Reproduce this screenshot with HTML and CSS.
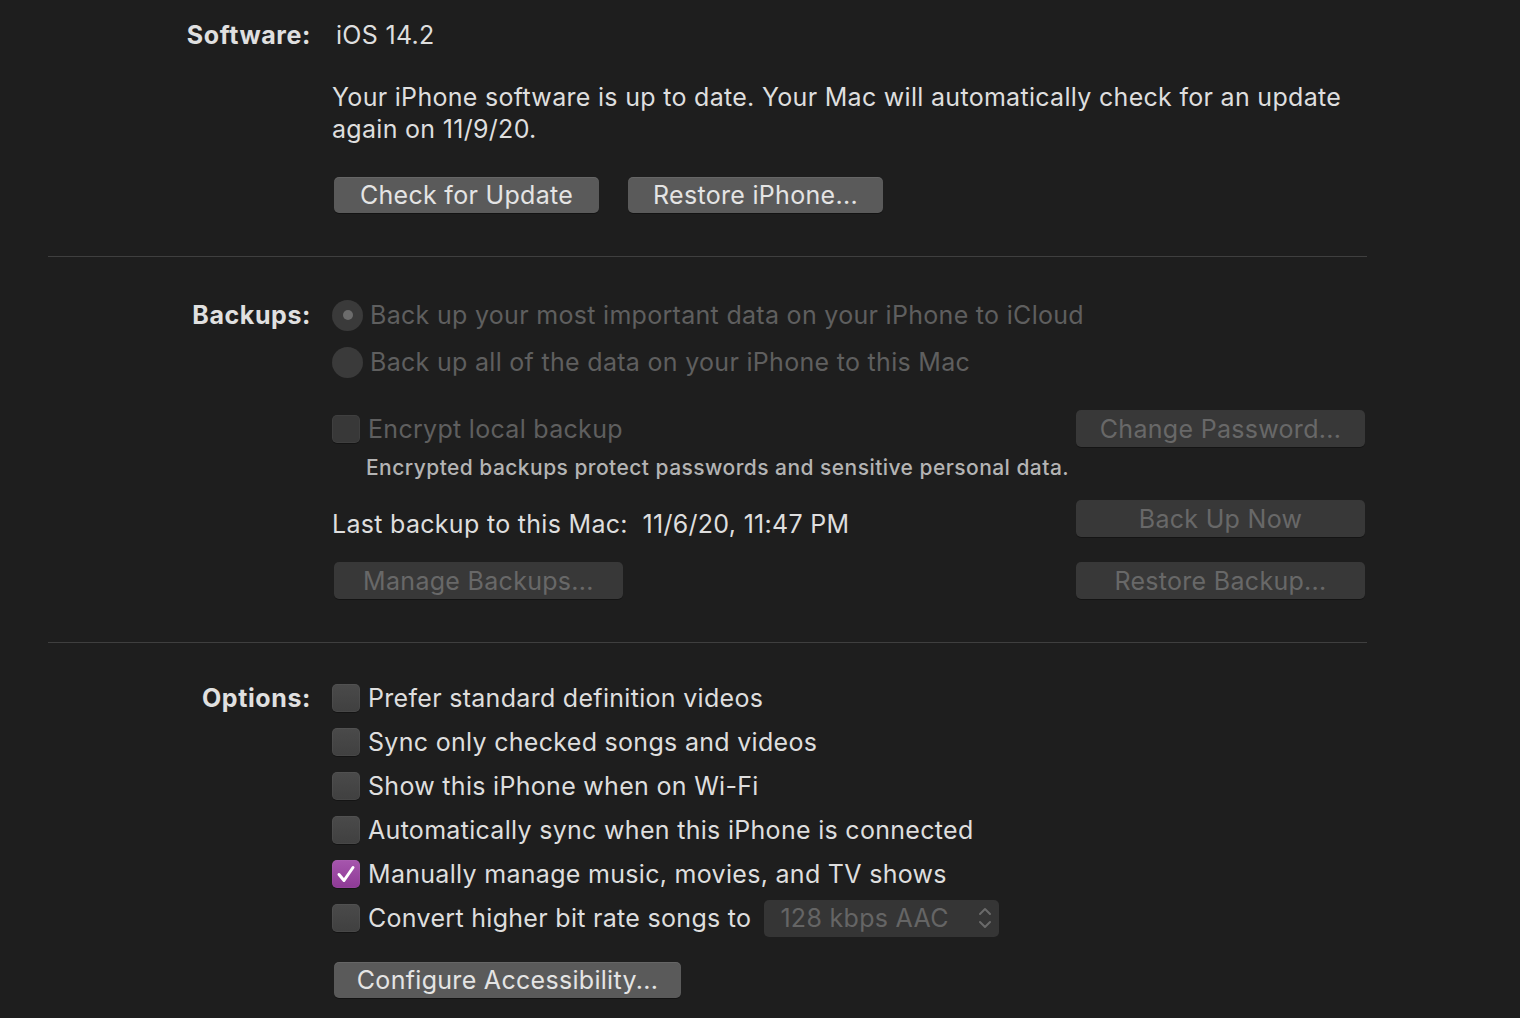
FILE: index.html
```html
<!DOCTYPE html>
<html>
<head>
<meta charset="utf-8">
<link rel="stylesheet" href="styles.css">
</head>
<body>
<div class="page">
  <section class="sec sec-software">
    <div class="label">Software:</div>
    <div class="content">
      <div class="line version">iOS 14.2</div>
      <p class="para">Your iPhone software is up to date. Your Mac will automatically check for an update again on 11/9/20.</p>
      <div class="btnrow">
        <button class="btn btn-check">Check for Update</button>
        <button class="btn btn-restore">Restore iPhone...</button>
      </div>
    </div>
  </section>
  <div class="sep"></div>
  <section class="sec sec-backups">
    <div class="label">Backups:</div>
    <div class="content">
      <div class="radio-row r1"><span class="radio on"></span><span class="dim">Back up your most important data on your iPhone to iCloud</span></div>
      <div class="radio-row r2"><span class="radio"></span><span class="dim">Back up all of the data on your iPhone to this Mac</span></div>
      <div class="split encrypt">
        <div class="chk-row"><span class="box disabled"></span><span class="dim enc-text">Encrypt local backup</span></div>
        <button class="btn off wide">Change Password...</button>
      </div>
      <div class="note">Encrypted backups protect passwords and sensitive personal data.</div>
      <div class="split last">
        <div class="lasttext">Last backup to this Mac:&nbsp; 11/6/20, 11:47 PM</div>
        <button class="btn off wide">Back Up Now</button>
      </div>
      <div class="split manage">
        <button class="btn off wide">Manage Backups...</button>
        <button class="btn off wide">Restore Backup...</button>
      </div>
    </div>
  </section>
  <div class="sep"></div>
  <section class="sec sec-options">
    <div class="label">Options:</div>
    <div class="content">
      <div class="opt"><span class="box"></span><span>Prefer standard definition videos</span></div>
      <div class="opt"><span class="box"></span><span>Sync only checked songs and videos</span></div>
      <div class="opt"><span class="box"></span><span>Show this iPhone when on Wi-Fi</span></div>
      <div class="opt"><span class="box"></span><span>Automatically sync when this iPhone is connected</span></div>
      <div class="opt"><span class="box checked"><svg viewBox="0 0 28 28" width="28" height="28"><path d="M7 14.5 L12 20.5 L21 7.5" fill="none" stroke="#fff" stroke-width="3" stroke-linecap="round" stroke-linejoin="round"/></svg></span><span>Manually manage music, movies, and TV shows</span></div>
      <div class="opt"><span class="box"></span><span>Convert higher bit rate songs to</span>
        <div class="select"><span>128 kbps AAC</span><svg class="arrows" viewBox="0 0 16 30" width="16" height="30"><path d="M3 11 L8 6 L13 11 M3 19 L8 24 L13 19" fill="none" stroke="#6a6a6a" stroke-width="2" stroke-linecap="round" stroke-linejoin="round"/></svg></div>
      </div>
      <div class="btnrow cfg">
        <button class="btn btn-cfg">Configure Accessibility...</button>
      </div>
    </div>
  </section>
</div>
</body>
</html>
```
FILE: styles.css
```css
html, body {
  margin: 0;
  padding: 0;
  background: #1e1e1e;
  height: 100%;
}
body {
  font-family: Inter, "Noto Sans", "Liberation Sans", sans-serif;
  color: #dedede;
  font-size: 25px;
  letter-spacing: 0.3px;
  overflow: hidden;
}
.page {
  width: 1520px;
}
.sec {
  display: grid;
  grid-template-columns: 311px 1033px;
  column-gap: 21px;
}
.label {
  text-align: right;
  font-weight: 700;
  color: #e0e0e0;
  line-height: 32px;
  letter-spacing: 0.6px;
}
.content {
  display: flex;
  flex-direction: column;
}
.sec-software { padding-top: 19px; }
.line { line-height: 32px; }
.version { padding-left: 4px; }
.para {
  margin: 30px 0 0 0;
  line-height: 32px;
  width: 1025px;
}
.btnrow {
  display: flex;
  gap: 29px;
  margin-top: 32px;
  padding-left: 2px;
}
.btn {
  font-family: inherit;
  font-size: 25px;
  letter-spacing: 0.3px;
  height: 36px;
  border: none;
  border-radius: 5px;
  background: #5a5a5a;
  color: #e4e4e4;
  padding: 0;
  box-shadow: 0 1px 0 rgba(0,0,0,0.35), inset 0 1px 0 rgba(255,255,255,0.08);
}
.btn-check { width: 265px; }
.btn-restore { width: 255px; }
.btn-cfg { width: 347px; }
.btn.off {
  background: #383838;
  color: #686868;
  box-shadow: 0 1px 0 rgba(0,0,0,0.3);
  height: 37px;
}
.btn.wide { width: 289px; }
.sep {
  margin: 43px 0 0 48px;
  width: 1319px;
  height: 1px;
  background: #3f3f3f;
}
.sec-backups { padding-top: 42px; }
.radio-row {
  display: flex;
  align-items: center;
  height: 32px;
  gap: 7px;
}
.r2 { margin-top: 15px; }
.radio {
  width: 31px;
  height: 31px;
  border-radius: 50%;
  background: #3a3a3a;
  display: flex;
  align-items: center;
  justify-content: center;
  flex: none;
}
.radio.on::after {
  content: "";
  width: 10px;
  height: 10px;
  border-radius: 50%;
  background: #6c6c6c;
}
.dim { color: #5f5f5f; }
.split {
  display: flex;
  justify-content: space-between;
  align-items: center;
}
.encrypt { margin-top: 32px; height: 37px; }
.chk-row, .opt {
  display: flex;
  align-items: center;
  gap: 8px;
}
.box {
  width: 28px;
  height: 28px;
  border-radius: 5px;
  background: linear-gradient(#4a4a4a, #404040);
  box-shadow: inset 0 0 0 1px rgba(255,255,255,0.04), 0 1px 0 rgba(0,0,0,0.3);
  flex: none;
  display: flex;
}
.box.disabled { background: #383838; }
.box.checked { background: linear-gradient(#a656ad, #8e3a96); }
.note {
  margin-top: 9px;
  padding-left: 34px;
  font-size: 21px;
  letter-spacing: 0.45px;
  line-height: 24px;
  color: #b4b4b4;
  font-weight: 500;
}
.last { margin-top: 20px; height: 37px; align-items: flex-start; }
.lasttext { line-height: 32px; padding-top: 8px; }
.manage { margin-top: 25px; height: 37px; }
.manage .btn:first-child { margin-left: 2px; }
.sec-options { padding-top: 33px; }
.sec-options .label { line-height: 44px; }
.opt { height: 44px; }
.select {
  margin-left: 5px;
  width: 235px;
  height: 37px;
  border-radius: 5px;
  background: #353535;
  color: #656565;
  display: flex;
  align-items: center;
  justify-content: space-between;
  padding: 0 6px 0 16px;
  box-sizing: border-box;
}
.cfg { margin-top: 22px; }
```
